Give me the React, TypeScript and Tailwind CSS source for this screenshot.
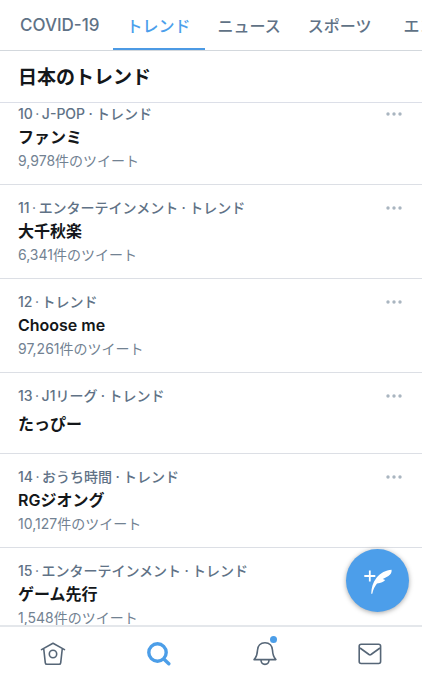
import { useState } from "react";

type Trend = {
  rank: number;
  category?: string;
  title: string;
  count?: string;
};

const tabs = [
  { label: "COVID-19", style: "pl-[13px] text-[17px]" },
  { label: "トレンド", style: "pl-[13px] text-base" },
  { label: "ニュース", style: "pl-[13px] text-base" },
  { label: "スポーツ", style: "pl-[13px] text-base" },
  { label: "エンタメ", style: "pl-[18px] text-base" },
];

const trends: Trend[] = [
  { rank: 10, category: "J-POP", title: "ファンミ", count: "9,978" },
  { rank: 11, category: "エンターテインメント", title: "大千秋楽", count: "6,341" },
  { rank: 12, title: "Choose me", count: "97,261" },
  { rank: 13, category: "J1リーグ", title: "たっぴー" },
  { rank: 14, category: "おうち時間", title: "RGジオング", count: "10,127" },
  { rank: 15, category: "エンターテインメント", title: "ゲーム先行", count: "1,548" },
];

function TrendRow({ trend }: { trend: Trend }) {
  return (
    <li className="flex items-start justify-between border-b border-[#dcdfe5] pt-3 pr-5 pb-3 pl-[18px] first:pt-0">
      <div className="min-w-0">
        <p className="flex h-[22px] items-center text-sm font-medium text-[#607286]">
          <span>{trend.rank}</span>
          <span className="w-[9px] text-center font-normal">·</span>
          {trend.category && (
            <>
              <span>{trend.category}</span>
              <span className="w-[11px] text-center">·</span>
            </>
          )}
          <span>トレンド</span>
        </p>
        <h2
          className={`text-base font-semibold text-[#14171a] ${
            trend.count ? "leading-[25px]" : "leading-[34px]"
          }`}
        >
          {trend.title}
        </h2>
        {trend.count && (
          <p className="text-sm leading-[22px] text-[#728292]">{trend.count}件のツイート</p>
        )}
      </div>
      <button type="button" aria-label="その他" className="flex h-[22px] items-center text-[#a9b5c0]">
        <svg viewBox="0 0 16 4" className="h-1 w-4" fill="currentColor">
          <circle cx="2" cy="2" r="1.7" />
          <circle cx="8" cy="2" r="1.7" />
          <circle cx="14" cy="2" r="1.7" />
        </svg>
      </button>
    </li>
  );
}

export default function App() {
  const [active, setActive] = useState("トレンド");

  return (
    <div className="flex h-screen flex-col bg-white font-['Inter','Noto_Sans_CJK_JP',sans-serif]">
      <nav className="flex h-[51px] shrink-0 overflow-hidden border-b border-[#d3d8dd] pl-[7px]">
        {tabs.map(({ label, style }) => (
          <button
            key={label}
            type="button"
            onClick={() => setActive(label)}
            className={`shrink-0 border-b-2 pt-[4px] pr-[14px] font-medium whitespace-nowrap ${style} ${
              label === active ? "border-[#4c9ae4] text-[#4c9fec]" : "border-transparent text-[#607286]"
            }`}
          >
            {label}
          </button>
        ))}
      </nav>

      <header className="flex h-[52px] shrink-0 items-center border-b border-[#dcdfe8] px-[18px] pt-[4px]">
        <h1 className="text-[19px] font-bold text-[#14171a]">日本のトレンド</h1>
      </header>

      <div className="relative min-h-0 flex-1">
        <main className="h-full overflow-hidden">
          <ul>
            {trends.map((trend) => (
              <TrendRow key={trend.rank} trend={trend} />
            ))}
          </ul>
        </main>
        <button
          type="button"
          aria-label="ツイートする"
          className="absolute right-[13px] bottom-[13px] flex size-[63px] items-center justify-center rounded-full bg-[#4c9eea] text-white shadow-[0_1px_5px_rgba(0,0,0,0.35)]"
        >
          <svg viewBox="0 0 32 32" className="size-8" fill="none">
            <path d="M7.800 5.500v11M2.300 11h11" stroke="currentColor" strokeWidth="1.800" />
            <path
              d="M9.200 28.800C9.400 22.800 11 17 14.500 12.800 18.500 8 23.800 5.200 29.600 4.800c.3 2.700-1 4.900-3.200 6.300-1.700 1.100-3.600 1.900-5.600 3l2.400.9c-1.500 2-4.200 2.900-8.200 3.600-2.200 2.800-3.900 6-4.700 10.200z"
              fill="currentColor"
            />
          </svg>
        </button>
      </div>

      <footer className="grid h-[55px] shrink-0 grid-cols-4 border-t-2 border-[#e4e7eb] text-[#566677]">
        <button type="button" aria-label="ホーム" className="flex items-center justify-center">
          <svg viewBox="0 0 26 26" className="size-[26px]" fill="none" stroke="currentColor" strokeWidth="1.600" strokeLinecap="round" strokeLinejoin="round">
            <path d="M1.500 8.600 13 2.200l11.500 6.400M3.700 7.500l1.600 14.300c.1 1 .7 1.500 1.600 1.500h12.200c.9 0 1.500-.5 1.600-1.500l1.600-14.300" />
            <circle cx="13" cy="13" r="3.700" />
          </svg>
        </button>
        <button type="button" aria-label="検索" className="flex items-center justify-center text-[#4c9ee8]">
          <svg viewBox="0 0 26 26" className="size-[26px]" fill="none" stroke="currentColor" strokeWidth="3.400" strokeLinecap="round">
            <circle cx="12.500" cy="11.500" r="8.700" />
            <path d="m19.300 18.500 4.500 4.300" />
          </svg>
        </button>
        <button type="button" aria-label="通知" className="flex items-center justify-center">
          <span className="relative">
            <svg viewBox="-1 0 26 26" className="size-[26px]" fill="none" stroke="currentColor" strokeWidth="1.600" strokeLinecap="round" strokeLinejoin="round">
              <path d="M13 1.700c-4.500 0-7.300 3.300-7.500 7.500-.2 4.500-.7 6.500-3.400 9.400h21.800c-2.700-2.900-3.200-4.900-3.400-9.400-.2-4.200-3-7.500-7.500-7.500zM8.900 18.800c.2 2.900 1.800 4.600 4.100 4.600s3.900-1.700 4.100-4.600" />
            </svg>
            <span className="absolute -top-[5px] right-0 size-[7px] rounded-full bg-[#4c9ee8]" />
          </span>
        </button>
        <button type="button" aria-label="メッセージ" className="flex items-center justify-center">
          <svg viewBox="-1 0 26 26" className="size-[26px]" fill="none" stroke="currentColor" strokeWidth="1.600" strokeLinejoin="round">
            <rect x="2.200" y="3.300" width="21.400" height="19.200" rx="2" />
            <path d="m3 7 9 6.500c.6.4 1.400.4 2 0L23 7" />
          </svg>
        </button>
      </footer>
    </div>
  );
}
